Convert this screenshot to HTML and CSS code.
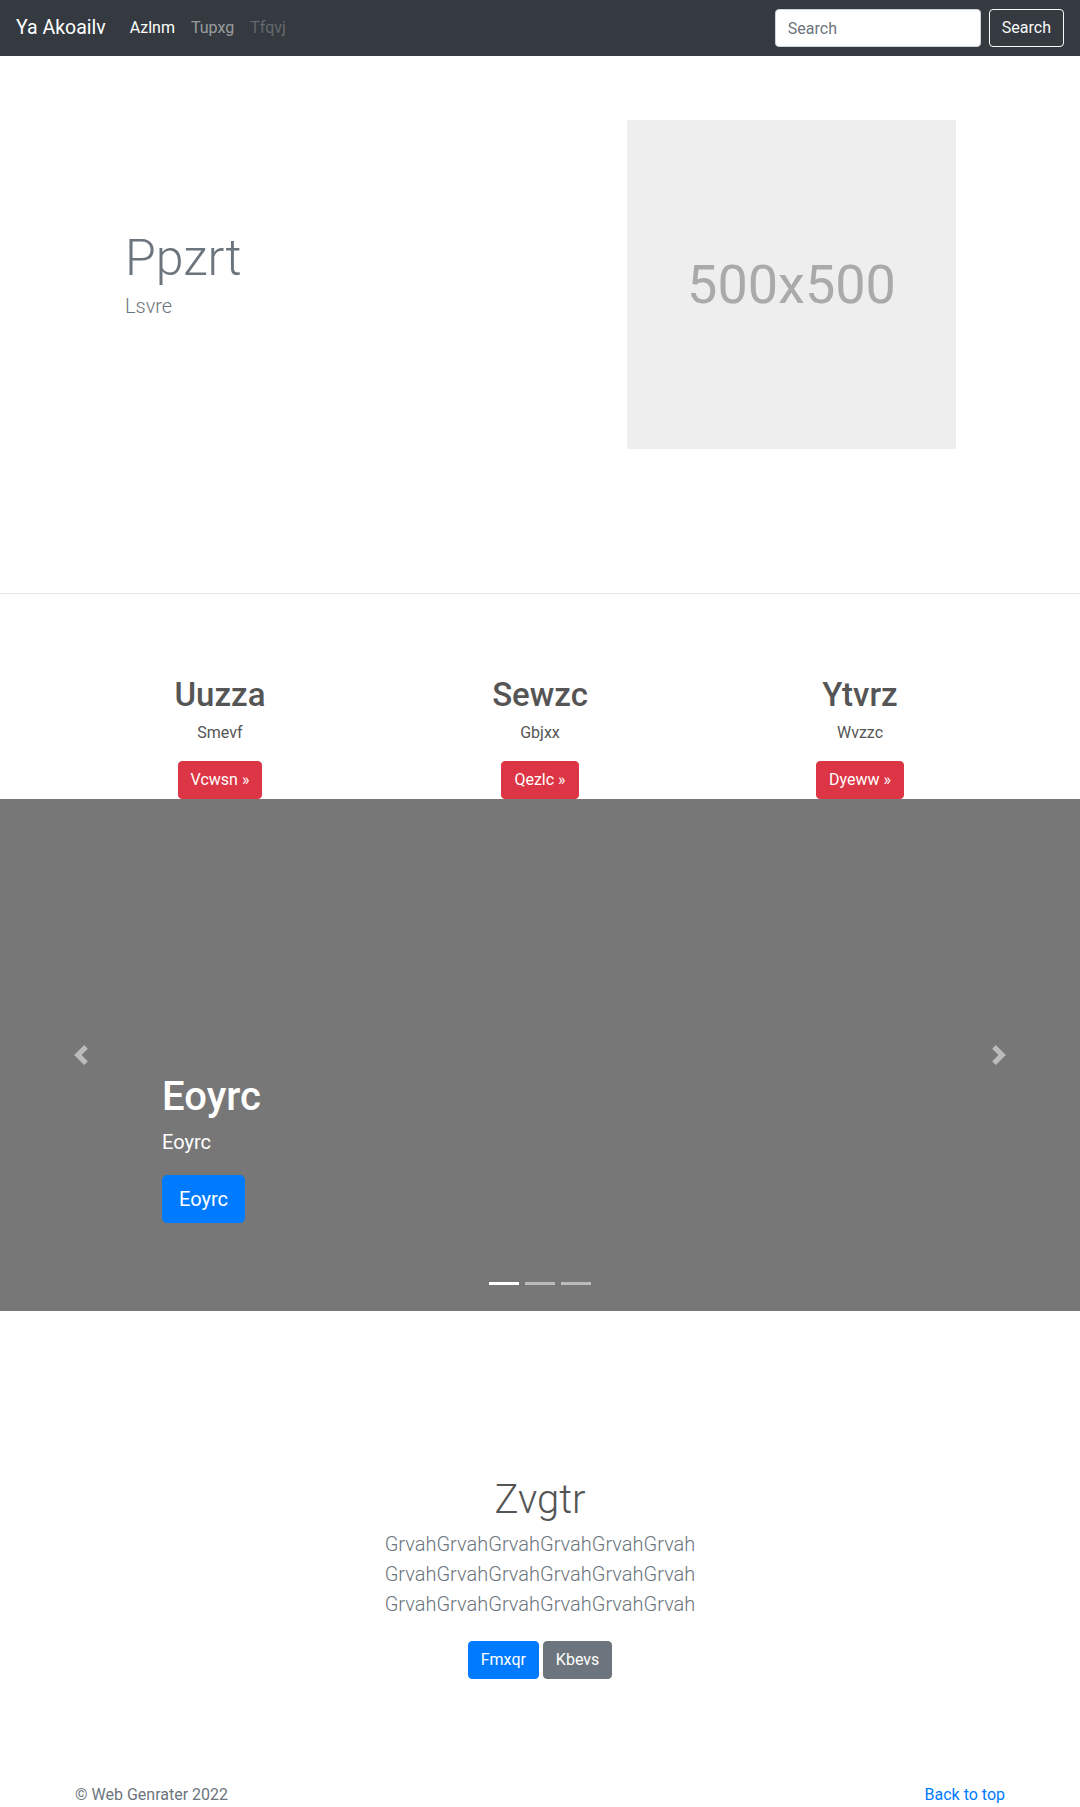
FILE: index.html
```html
<!DOCTYPE html>
<html lang="en">
<head>
<meta charset="utf-8">
<title>Ya Akoailv</title>
<link rel="stylesheet" href="styles.css">
</head>
<body>
<nav class="navbar">
  <a class="brand" href="#">Ya Akoailv</a>
  <ul class="nav">
    <li><a class="nav-link active" href="#">Azlnm</a></li>
    <li><a class="nav-link" href="#">Tupxg</a></li>
    <li><a class="nav-link disabled" href="#">Tfqvj</a></li>
  </ul>
  <form class="search">
    <input class="search-input" type="text" placeholder="Search">
    <button class="btn btn-outline-light" type="button">Search</button>
  </form>
</nav>

<main>
  <section class="hero">
    <div class="hero-text">
      <h1 class="hero-title">Ppzrt</h1>
      <p class="hero-lead">Lsvre</p>
    </div>
    <div class="hero-media">
      <div class="placeholder">500x500</div>
    </div>
  </section>

  <hr class="divider">

  <section class="features">
    <div class="feature">
      <h2 class="feature-title">Uuzza</h2>
      <p class="feature-text">Smevf</p>
      <a class="btn btn-danger" href="#">Vcwsn »</a>
    </div>
    <div class="feature">
      <h2 class="feature-title">Sewzc</h2>
      <p class="feature-text">Gbjxx</p>
      <a class="btn btn-danger" href="#">Qezlc »</a>
    </div>
    <div class="feature">
      <h2 class="feature-title">Ytvrz</h2>
      <p class="feature-text">Wvzzc</p>
      <a class="btn btn-danger" href="#">Dyeww »</a>
    </div>
  </section>

  <section class="carousel">
    <ol class="indicators">
      <li class="indicator active"></li>
      <li class="indicator"></li>
      <li class="indicator"></li>
    </ol>
    <div class="caption">
      <h1 class="caption-title">Eoyrc</h1>
      <p class="caption-text">Eoyrc</p>
      <div class="caption-action"><a class="btn btn-lg btn-primary" href="#">Eoyrc</a></div>
    </div>
    <a class="control control-prev" href="#">
      <svg width="20" height="20" viewBox="0 0 8 8" fill="#fff"><path d="M5.25 0l-4 4 4 4 1.5-1.5L4.25 4l2.5-2.5L5.25 0z"/></svg>
    </a>
    <a class="control control-next" href="#">
      <svg width="20" height="20" viewBox="0 0 8 8" fill="#fff"><path d="M2.75 0l-1.5 1.5L3.75 4l-2.5 2.5L2.75 8l4-4-4-4z"/></svg>
    </a>
  </section>

  <section class="jumbotron">
    <h1 class="jumbotron-heading">Zvgtr</h1>
    <p class="jumbotron-lead">GrvahGrvahGrvahGrvahGrvahGrvah<br>GrvahGrvahGrvahGrvahGrvahGrvah<br>GrvahGrvahGrvahGrvahGrvahGrvah</p>
    <div class="jumbotron-actions">
      <a class="btn btn-primary" href="#">Fmxqr</a>
      <a class="btn btn-secondary" href="#">Kbevs</a>
    </div>
  </section>
</main>

<footer class="footer">
  <p class="copy">© Web Genrater 2022</p>
  <a class="back" href="#">Back to top</a>
</footer>
</body>
</html>
```

FILE: styles.css
```css
* { box-sizing: border-box; }

body {
  margin: 0;
  font-family: Roboto, "Open Sans", "Liberation Sans", sans-serif;
  font-size: 16px;
  line-height: 1.5;
  color: #212529;
  background: #fff;
}

a { text-decoration: none; }

/* Navbar */
.navbar {
  display: flex;
  align-items: center;
  height: 56px;
  padding: 0 16px;
  background: #343a40;
}
.brand {
  font-size: 19.5px;
  line-height: 30px;
  color: #fff;
  margin-right: 16px;
}
.nav {
  display: flex;
  flex: 1;
  list-style: none;
  margin: 0;
  padding: 0;
}
.nav-link {
  display: block;
  padding: 8px;
  color: rgba(255, 255, 255, 0.5);
}
.nav-link.active { color: #fff; }
.nav-link.disabled { color: rgba(255, 255, 255, 0.25); }

.search {
  display: flex;
  align-items: center;
  gap: 8px;
}
.search-input {
  width: 206px;
  height: 38px;
  padding: 6px 12px;
  font: inherit;
  color: #495057;
  background: #fff;
  border: 1px solid #ced4da;
  border-radius: 4px;
}
.search-input::placeholder { color: #6c757d; }

/* Buttons */
.btn {
  display: inline-block;
  font: inherit;
  font-size: 16px;
  line-height: 24px;
  padding: 6px 12px;
  border: 1px solid transparent;
  border-radius: 4px;
  color: #fff;
  text-align: center;
  cursor: pointer;
}
.btn-outline-light {
  background: transparent;
  color: #f8f9fa;
  border-color: #f8f9fa;
}
.btn-danger { background: #dc3545; border-color: #dc3545; }
.btn-primary { background: #007bff; border-color: #007bff; }
.btn-secondary { background: #6c757d; border-color: #6c757d; }
.btn-lg {
  font-size: 20px;
  line-height: 30px;
  padding: 8px 16px;
  border-radius: 5px;
}

/* Hero */
.hero {
  display: flex;
  align-items: center;
  width: 960px;
  margin: 0 auto;
  padding: 64px 0 144px;
}
.hero-text {
  width: 480px;
  padding: 0 0 20px 65px;
}
.hero-title {
  margin: 0;
  font-size: 50px;
  font-weight: 300;
  line-height: 1.2;
  color: #6c757d;
}
.hero-lead {
  margin: 3px 0 0;
  font-size: 20px;
  font-weight: 300;
  color: #6c757d;
}
.hero-media {
  width: 480px;
  padding-left: 87px;
}
.placeholder {
  width: 329px;
  height: 329px;
  display: flex;
  align-items: center;
  justify-content: center;
  background: #eee;
  color: #aaa;
  font-size: 54px;
}

.divider {
  margin: 0;
  border: 0;
  border-top: 1px solid rgba(0, 0, 0, 0.1);
}

/* Features */
.features {
  display: grid;
  grid-template-columns: repeat(3, 1fr);
  width: 960px;
  margin: 0 auto;
  padding-top: 81px;
}
.feature {
  display: flex;
  flex-direction: column;
  align-items: center;
  text-align: center;
}
.feature-title {
  margin: 0 0 6px;
  font-size: 33px;
  font-weight: 500;
  line-height: 1.2;
  color: #555;
}
.feature-text {
  margin: 0 0 16px;
  color: #555;
}

/* Carousel */
.carousel {
  position: relative;
  height: 512px;
  background: #777;
  overflow: hidden;
}
.indicators {
  position: absolute;
  left: 0;
  right: 0;
  bottom: 16px;
  display: flex;
  justify-content: center;
  list-style: none;
  margin: 0;
  padding: 0;
}
.indicator {
  width: 30px;
  height: 3px;
  margin: 10px 3px;
  background: #fff;
  opacity: 0.5;
}
.indicator.active { opacity: 1; }
.caption {
  position: absolute;
  left: 162px;
  right: 162px;
  bottom: 68px;
  padding: 20px 0;
  color: #fff;
}
.caption-title {
  margin: 0 0 6px;
  font-size: 40px;
  font-weight: 500;
  line-height: 1.2;
}
.caption-text {
  margin: 0 0 18px;
  font-size: 20px;
  line-height: 30px;
}
.caption-action { display: flex; }
.control {
  position: absolute;
  top: 0;
  bottom: 0;
  width: 162px;
  display: flex;
  align-items: center;
  justify-content: center;
  opacity: 0.5;
}
.control-prev { left: 0; }
.control-next { right: 0; }

/* Jumbotron */
.jumbotron {
  text-align: center;
  padding: 165px 0 56px;
}
.jumbotron-heading {
  margin: 0 0 5px;
  font-size: 40px;
  font-weight: 300;
  line-height: 1.2;
  color: #555;
}
.jumbotron-lead {
  margin: 0 0 22px;
  font-size: 20px;
  font-weight: 300;
  line-height: 30px;
  color: #6c757d;
}

/* Footer */
.footer {
  display: flex;
  justify-content: space-between;
  width: 930px;
  margin: 0 auto;
  padding: 48px 0;
  color: #6c757d;
}
.copy { margin: 0; }
.back { color: #007bff; }
```
